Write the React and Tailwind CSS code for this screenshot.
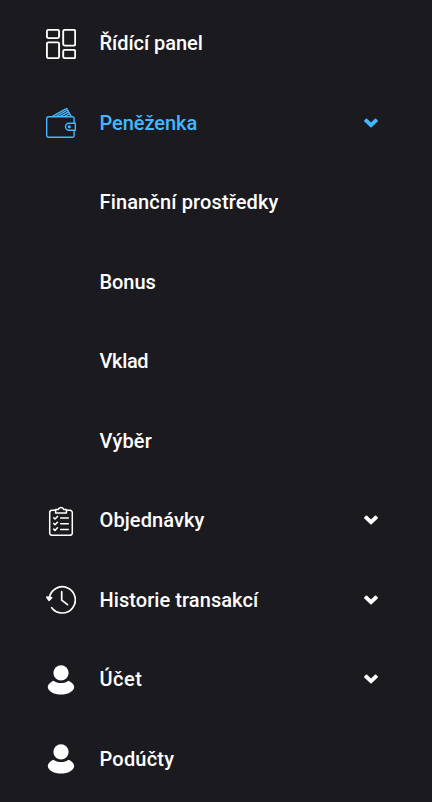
import React, { useState } from 'react';

const DashboardIcon = () => (
  <svg viewBox="0 0 30 30" className="mt-px w-[30px] h-[30px]" fill="none" stroke="currentColor" strokeWidth="1.9">
    <rect x="0.9" y="0.9" width="12.2" height="8.2" rx="1.5" />
    <rect x="0.9" y="13.4" width="12.2" height="15.7" rx="1.5" />
    <rect x="17.2" y="0.9" width="12" height="15.7" rx="1.5" />
    <rect x="17.2" y="20.9" width="12" height="8.2" rx="1.5" />
  </svg>
);

const WalletIcon = () => (
  <svg viewBox="0 0 30 30" className="mt-px w-[30px] h-[30px]" fill="none" stroke="currentColor" strokeWidth="1.4" strokeLinejoin="round">
    <path d="M28.1 15V10.6a1.8 1.8 0 0 0-1.8-1.8H2.5A1.8 1.8 0 0 0 .7 10.6V27.5a1.8 1.8 0 0 0 1.8 1.8H26.3a1.8 1.8 0 0 0 1.8-1.8V22.5" />
    <path d="M23 15.3H29.3V22.3H23a3.5 3.5 0 0 1 0-7Z" />
    <circle cx="23.3" cy="18.8" r="0.9" />
    <path d="M6 8.6 19.8.9a1 1 0 0 1 1.4.4L25.3 8.6M10 8.6 21.5 2M14 8.6 22.6 3.7M18.3 8.6 23.8 5.5" />
  </svg>
);

const OrdersIcon = () => (
  <svg viewBox="0 0 30 30" className="mt-px w-[30px] h-[30px]" fill="none" stroke="currentColor" strokeWidth="1.5" strokeLinecap="round" strokeLinejoin="round">
    <path d="M9.5 4.3H6a2.3 2.3 0 0 0-2.3 2.3V27a2.3 2.3 0 0 0 2.3 2.3H24a2.3 2.3 0 0 0 2.3-2.3V6.6A2.3 2.3 0 0 0 24 4.3H20.5" />
    <path d="M9.6 6.9V3.6H12.2a2.9 2.9 0 0 1 5.6 0H20.4V6.9Z" />
    <path d="M14.7 12H22.3M14.7 17.8H22.3M14.7 23.4H22.3" />
    <path d="M7.7 11.7 9 13 11.5 10.4M7.7 17.5 9 18.8 11.5 16.2M7.7 23.1 9 24.4 11.5 21.8" />
  </svg>
);

const HistoryIcon = () => (
  <svg viewBox="0 0 30 30" className="mt-px w-[30px] h-[30px]" fill="none" stroke="currentColor" strokeWidth="1.7" strokeLinecap="round" strokeLinejoin="round">
    <path d="M3.2 13.5A13.1 13.1 0 1 1 5.7 22.7" />
    <path d="M.9 12.2 3 15.3 5.6 12.6Z" fill="currentColor" />
    <path d="M15.7 6.5V15.2L21.5 19.7" />
  </svg>
);

const UserIcon = () => (
  <svg viewBox="0 0 30 30" className="mt-px w-[30px] h-[30px]" fill="currentColor">
    <ellipse cx="15" cy="7.9" rx="7.6" ry="7.7" />
    <path d="M7.5 15.7C9.5 17.3 12 18.1 15 18.1S20.5 17.3 22.5 15.7C25.5 17 28.2 19.5 28.2 21.9C28.2 26.2 21.5 29.6 15 29.6S1.8 26.2 1.8 21.9C1.8 19.5 4.5 17 7.5 15.7Z" />
  </svg>
);

const Chevron = () => (
  <svg viewBox="0 0 14 10" className="ml-auto w-3.5 h-2.5" fill="currentColor">
    <path d="M.3 2.3 1.9.7Q2.500.2 3.100.7L7 4.400 10.900.7Q11.500.2 12.100.7L13.700 2.300Q14.100 2.900 13.700 3.400L7.600 9.300Q7 9.800 6.400 9.300L.3 3.400Q-.1 2.900.3 2.300Z" />
  </svg>
);

const menuItems = [
  { label: 'Řídící panel', icon: DashboardIcon, text: 'tracking-[-0.05px]' },
  {
    label: 'Peněženka',
    icon: WalletIcon,
    text: 'tracking-[-0.05px]',
    children: [
      { label: 'Finanční prostředky', text: 'tracking-[0.14px]' },
      { label: 'Bonus', text: 'tracking-[-0.05px]' },
      { label: 'Vklad', text: 'tracking-[-0.35px]' },
      { label: 'Výběr', text: 'tracking-[0.15px]' },
    ],
  },
  { label: 'Objednávky', icon: OrdersIcon, text: 'tracking-[0.1px]', expandable: true },
  { label: 'Historie transakcí', icon: HistoryIcon, text: 'tracking-[0.07px]', expandable: true },
  { label: 'Účet', icon: UserIcon, text: 'tracking-[0.5px]', expandable: true },
  { label: 'Podúčty', icon: UserIcon, text: 'tracking-[0.2px]' },
];

const App = () => {
  const [active, setActive] = useState('Peněženka');

  return (
    <nav className="w-full min-h-[802px] pt-[3.5px] bg-[#1b1a1f] text-white font-['Roboto','Noto_Sans',sans-serif] text-xl font-medium">
      <ul>
        {menuItems.map(({ label, icon: Icon, text, children, expandable }) => (
          <li key={label}>
            <button
              type="button"
              onClick={() => setActive(active === label ? '' : label)}
              className={`flex items-center w-full h-[79.5px] pl-[46px] pr-[54px] text-left ${active === label ? 'text-[#43b8ff]' : ''}`}
            >
              <Icon />
              <span className={`ml-[23.5px] whitespace-nowrap ${text}`}>{label}</span>
              {(children || expandable) && <Chevron />}
            </button>
            {children && active === label && (
              <ul>
                {children.map((child) => (
                  <li key={child.label} className="flex items-center h-[79.5px] pl-[99.5px]">
                    <span className={`whitespace-nowrap ${child.text}`}>{child.label}</span>
                  </li>
                ))}
              </ul>
            )}
          </li>
        ))}
      </ul>
    </nav>
  );
};

export default App;
